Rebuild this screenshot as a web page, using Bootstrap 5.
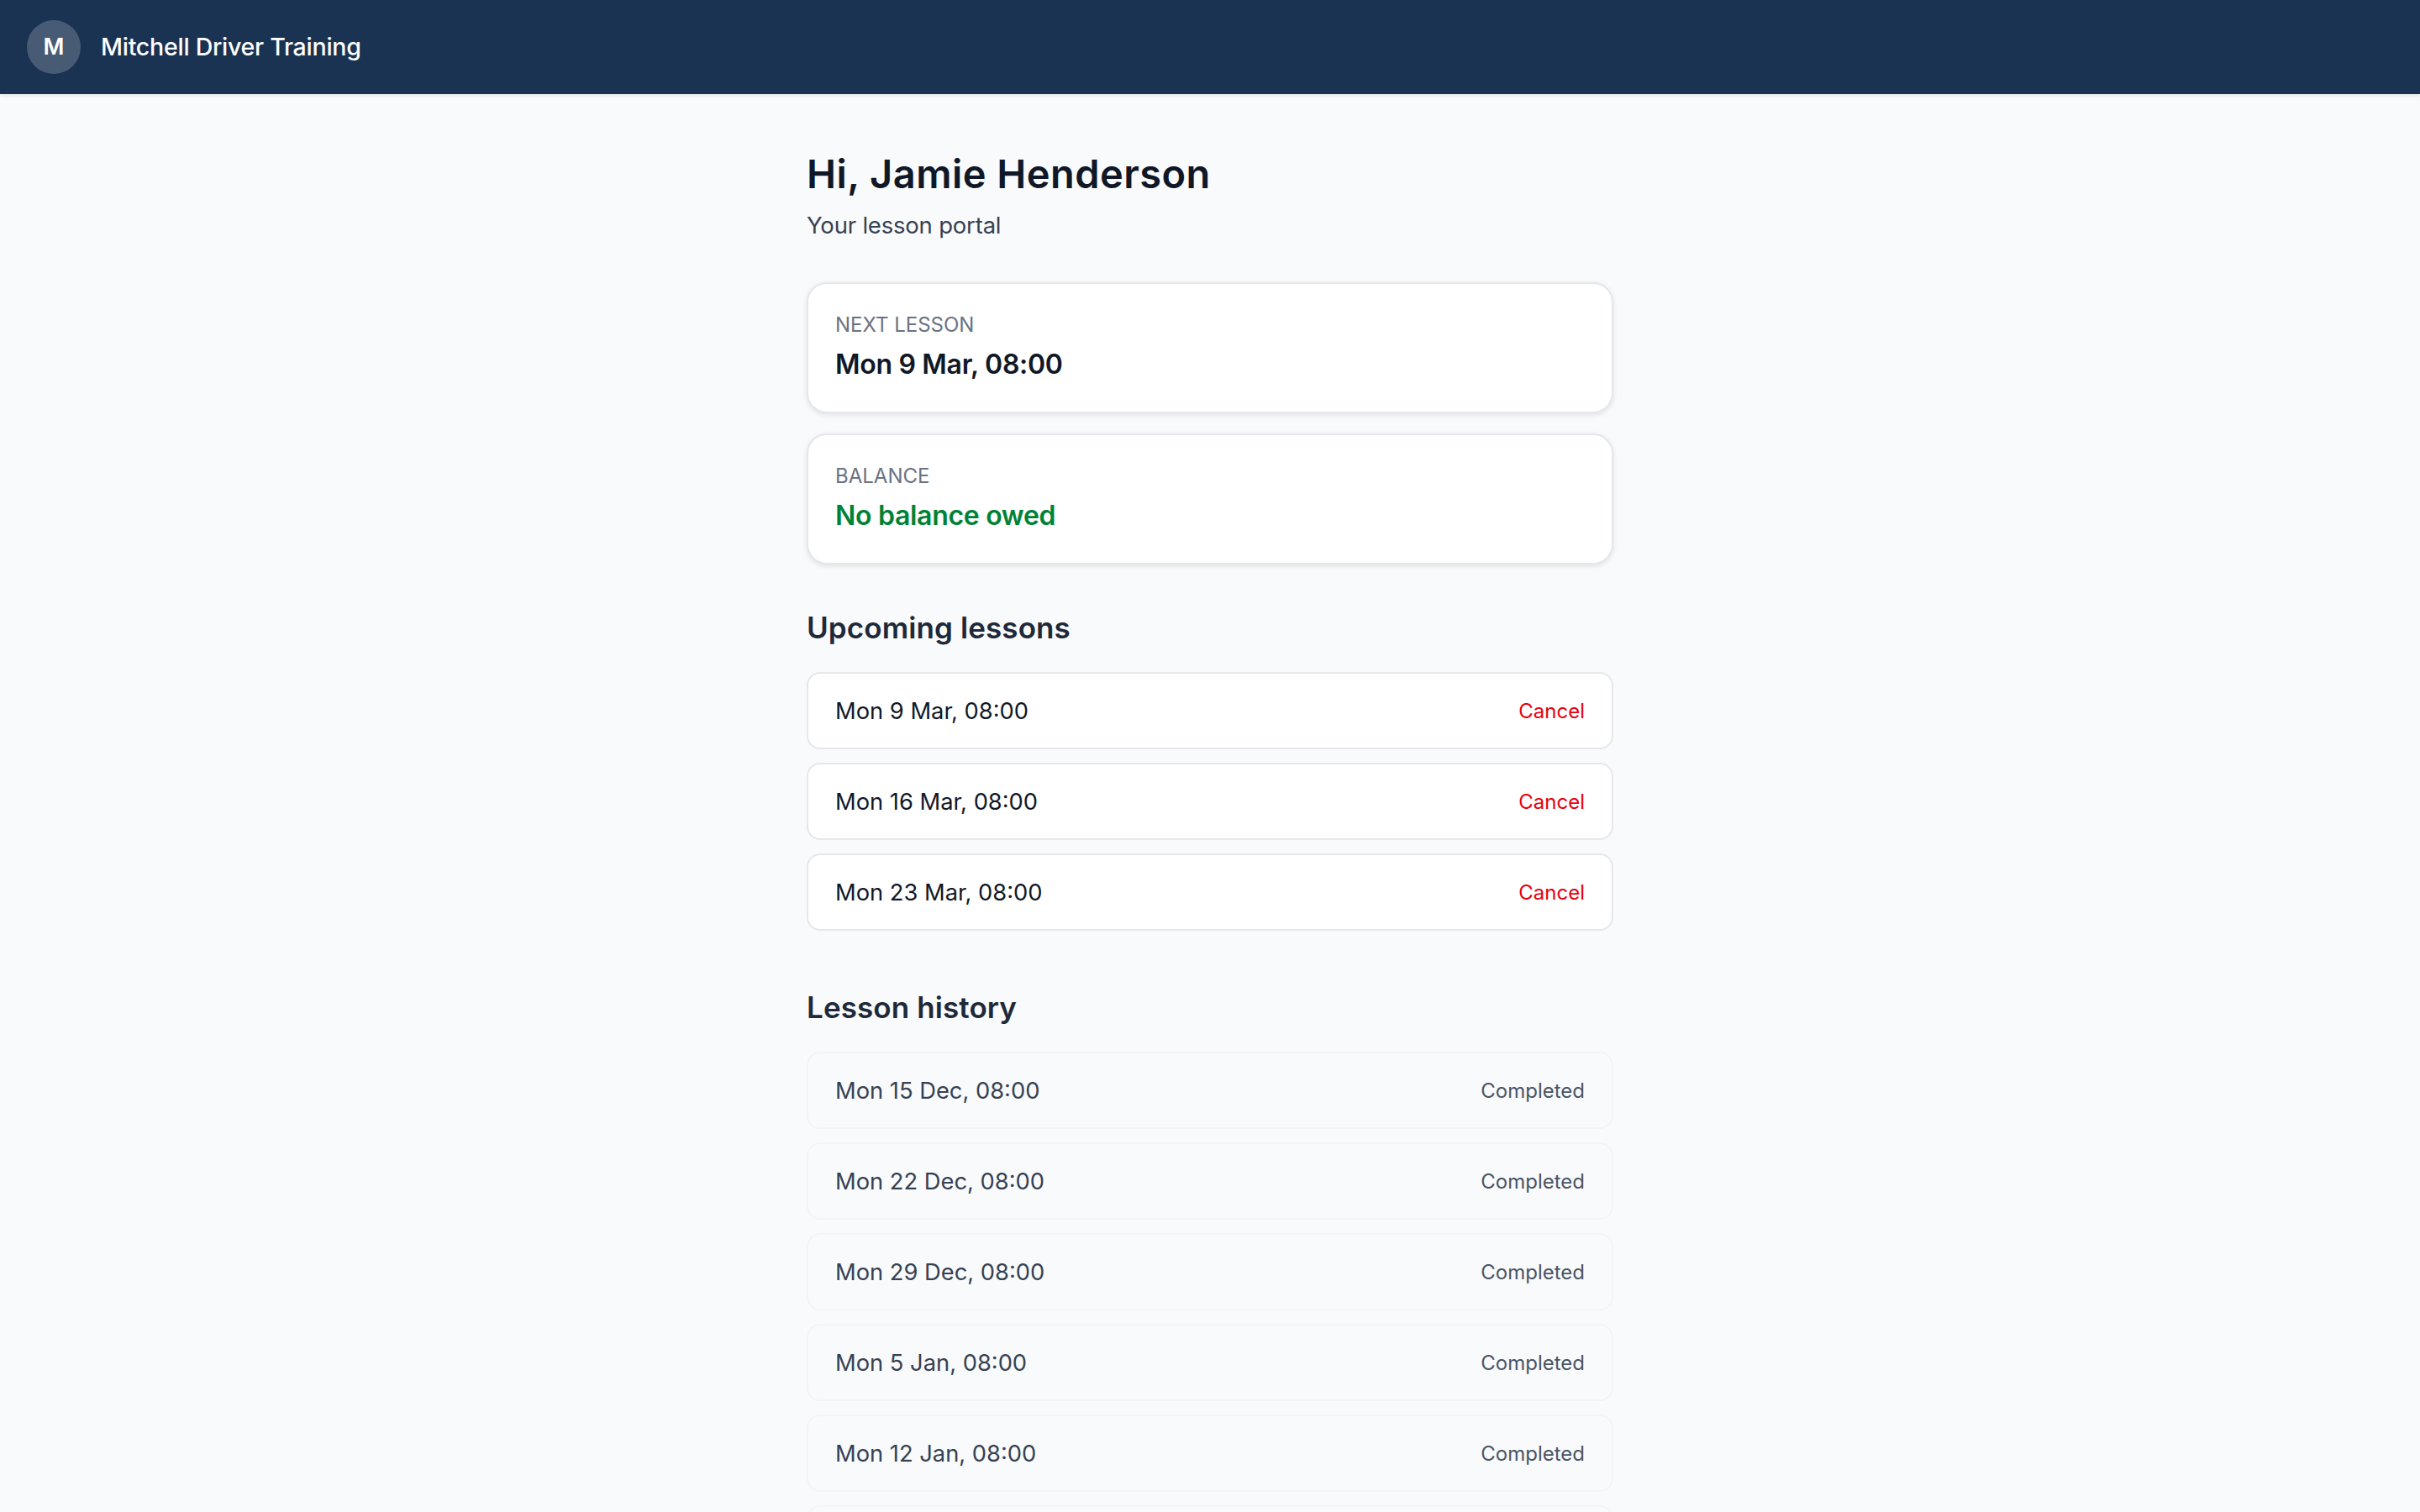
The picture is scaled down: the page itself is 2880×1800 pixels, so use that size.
<!doctype html>
<html lang="en">
<head>
<meta charset="utf-8">
<title>Mitchell Driver Training</title>
<link href="https://cdn.jsdelivr.net/npm/bootstrap@5.3.0/dist/css/bootstrap.min.css" rel="stylesheet">
<style>
html,body{background:#f9fafb;font-family:Inter,"Noto Sans",sans-serif;color:#101828}
.topbar{height:112px;background:#1a3353;padding:0 32px;box-shadow:0 2px 4px rgba(0,0,0,.1)}
.avatar-dot{width:64px;height:64px;background:rgba(255,255,255,.2);color:#fff;font-size:27px;font-weight:600}
.brand-name{font-size:28.5px;font-weight:500;color:#fff;margin-left:24px;line-height:40px;letter-spacing:-.25px}
.portal{width:960px;margin:0 auto;padding-top:64px}
.hello{font-size:47px;font-weight:600;line-height:62px;margin:0;color:#101828;letter-spacing:.45px}
.sub-hello{font-size:27.5px;line-height:44px;margin:8px 0 46px;color:#364153;letter-spacing:-.2px}
.info-box{border:2px solid #e5e7eb;border-radius:24px;background:#fff;box-shadow:0 2px 6px rgba(0,0,0,.1);padding:32px;margin-bottom:24px}
.info-label{font-size:24px;line-height:32px;color:#6a7282;margin-bottom:6px;padding-top:1px}
.info-value{font-size:32px;font-weight:600;line-height:49px;color:#101828;letter-spacing:-.3px}
.info-value.owed{color:#008236}
.sect-title{font-size:35px;font-weight:600;line-height:48px;color:#1e2939;margin:0 0 29px;letter-spacing:.1px}
.first-sect{margin-top:51px}
.second-sect{margin-top:67px}
.lesson-line{border:2px solid #e5e7eb;border-radius:16px;background:#fff;padding:25px 32px 23px;line-height:40px;height:92px;font-size:27.3px;color:#101828;margin-bottom:16px}
.lesson-line.past{border-color:#f3f4f6;background:#f9fafb;color:#364153}
.cancel-link{font-size:24px;color:#e7000b;text-decoration:none}
.done-tag{font-size:24px;color:#4a5565}
</style>
</head>
<body>
<nav class="navbar topbar justify-content-start">
  <div class="avatar-dot rounded-circle d-flex align-items-center justify-content-center">M</div>
  <span class="brand-name">Mitchell Driver Training</span>
</nav>
<main class="portal">
  <h1 class="hello">Hi, Jamie Henderson</h1>
  <p class="sub-hello">Your lesson portal</p>
  <div class="info-box">
    <div class="info-label text-uppercase">Next lesson</div>
    <div class="info-value">Mon 9 Mar, 08:00</div>
  </div>
  <div class="info-box">
    <div class="info-label text-uppercase">Balance</div>
    <div class="info-value owed">No balance owed</div>
  </div>
  <h2 class="sect-title first-sect">Upcoming lessons</h2>
  <div class="lesson-line d-flex justify-content-between align-items-center"><span>Mon 9 Mar, 08:00</span><a class="cancel-link" href="#">Cancel</a></div>
  <div class="lesson-line d-flex justify-content-between align-items-center"><span>Mon 16 Mar, 08:00</span><a class="cancel-link" href="#">Cancel</a></div>
  <div class="lesson-line d-flex justify-content-between align-items-center"><span>Mon 23 Mar, 08:00</span><a class="cancel-link" href="#">Cancel</a></div>
  <h2 class="sect-title second-sect">Lesson history</h2>
  <div class="lesson-line past d-flex justify-content-between align-items-center"><span>Mon 15 Dec, 08:00</span><span class="done-tag">Completed</span></div>
  <div class="lesson-line past d-flex justify-content-between align-items-center"><span>Mon 22 Dec, 08:00</span><span class="done-tag">Completed</span></div>
  <div class="lesson-line past d-flex justify-content-between align-items-center"><span>Mon 29 Dec, 08:00</span><span class="done-tag">Completed</span></div>
  <div class="lesson-line past d-flex justify-content-between align-items-center"><span>Mon 5 Jan, 08:00</span><span class="done-tag">Completed</span></div>
  <div class="lesson-line past d-flex justify-content-between align-items-center"><span>Mon 12 Jan, 08:00</span><span class="done-tag">Completed</span></div>
  <div class="lesson-line past"></div>
</main>
<script src="https://cdn.jsdelivr.net/npm/bootstrap@5.3.0/dist/js/bootstrap.bundle.min.js"></script>
</body>
</html>
